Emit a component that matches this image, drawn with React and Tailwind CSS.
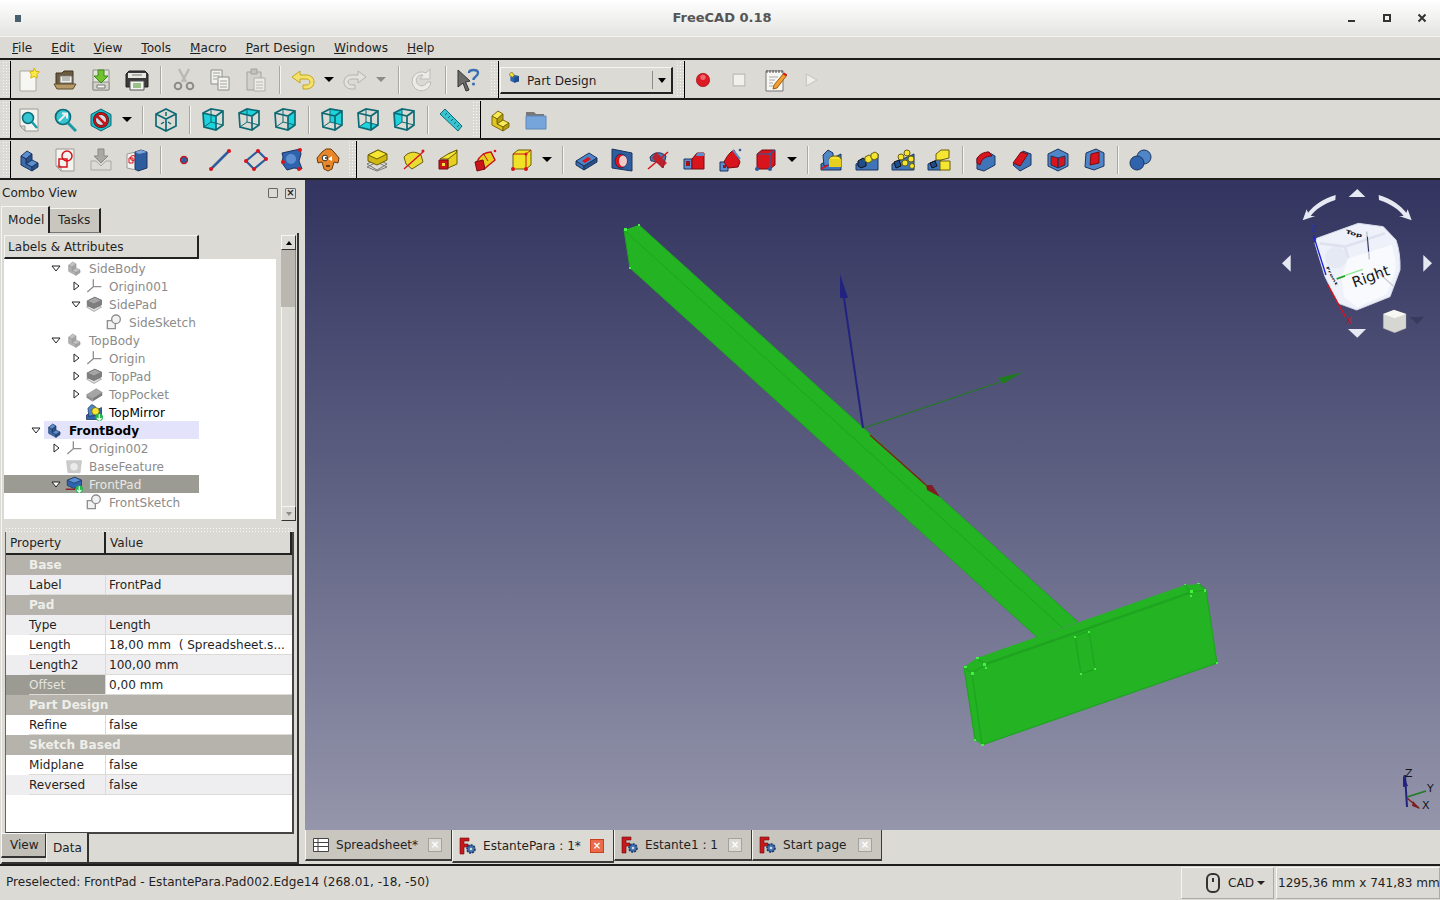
import React from 'react';

const FONT = { fontFamily: '"DejaVu Sans", sans-serif' };

const Svg = ({ s = 24, children }) => (
    <svg width={s} height={s} viewBox="0 0 24 24" className="shrink-0">{children}</svg>
);

// stepped L block used for body / part icons
const Step = ({ top = '#5c8fcf', left = '#3d6cab', right = '#27508a', line = '#1c3560', s }) => (
    <Svg s={s}>
        <path d="M4 8 10 3 15 6 9 11Z" fill={top} stroke={line} />
        <path d="M9 11 15 6V12L9 16Z" fill={right} stroke={line} />
        <path d="M9 16 15 12 21 15 15 19Z" fill={top} stroke={line} />
        <path d="M4 8 9 11V16L15 19V23L4 17Z" fill={left} stroke={line} />
        <path d="M15 19 21 15V19L15 23Z" fill={right} stroke={line} />
    </Svg>
);

// teal wire cube for the standard views
const Wire = ({ face }) => {
    const faces = {
        front: 'M2 5 15 8V22L3 19Z',
        top: 'M2 5 10 1 22 3 15 8Z',
        right: 'M15 8 22 3V17L15 22Z',
        rear: 'M10 1 22 3V17L10 14Z',
        bottom: 'M3 19 10 14 22 17 15 22Z',
        left: 'M2 5 10 1V14L3 19Z',
    };
    return (
        <Svg>
            {face && <path d={faces[face]} fill="#1fd3dd" />}
            <path d="M10 1V14L3 19M10 14 22 17" fill="none" stroke="#0d6a74" strokeWidth="1" />
            <path d="M2 5 10 1 22 3V17L15 22 3 19ZM2 5 15 8 22 3M15 8V22" fill="none" stroke="#0d6a74" strokeWidth="1.700" />
        </Svg>
    );
};

const IsoCube = () => (
    <Svg>
        <path d="M12 1 22 6V18L12 23 2 18V6ZM2 6 12 11 22 6M12 11V23" fill="none" stroke="#0d6a74" strokeWidth="1.700" />
        <path d="M7 16 10 14M17 16 14 14M12 4V8" stroke="#0d6a74" strokeWidth="1.500" />
    </Svg>
);

const Page = ({ children }) => (
    <Svg>
        <path d="M3 1H21V23H8L3 18Z" fill="#f3f3f0" stroke="#9a9a94" />
        <path d="M3 18H8V23Z" fill="#d5d5d0" stroke="#9a9a94" />
        {children}
    </Svg>
);

const Icons = {
    new: <Svg><path d="M3 3H19V23H3Z" fill="#f6f6f2" stroke="#a9a9a3" /><path d="m17 0 1.800 3.200 3.600.6-2.500 2.600.5 3.600-3.400-1.600-3.200 1.600.5-3.600L12.800 3.800l3.500-.6Z" fill="#fbe94c" stroke="#d9b400" /></Svg>,
    open: <Svg><path d="M3 5H9L11 3H20V19H3Z" fill="#6d5b3e" stroke="#3f3522" /><path d="M7 8H19V15H7Z" fill="#f1f0ea" stroke="#777" /><path d="M9 10H17M9 12H17" stroke="#888" /><path d="M1 16H23L20 21H4Z" fill="#b59a68" stroke="#5c4c2d" /></Svg>,
    save: <Svg><path d="M4 2H20V22H4Z" fill="#e4e4df" stroke="#8f8f89" /><path d="M4 14H20V22H4Z" fill="#d3d3cd" stroke="#8f8f89" /><path d="M8 17H16V20H8Z" fill="#f7f7f4" stroke="#777" /><path d="M9 2H15V8H19L12 15 5 8H9Z" fill="#70c22e" stroke="#3f8a16" /></Svg>,
    print: <Svg><path d="M1 6 4 3H20L23 6V19H1Z" fill="#3a3a3a" stroke="#222" /><path d="M3 5H21V10H3Z" fill="#e8e8e3" /><path d="M7 7H17" stroke="#777" /><path d="M5 13H19V22H5Z" fill="#f4f4f0" stroke="#555" /><path d="M8 15H16V20H8Z" fill="#9cc089" /></Svg>,
    cut: <Svg><path d="M7 1 14 14M17 1 10 14" stroke="#b9b8b2" strokeWidth="2.400" /><circle cx="6" cy="18" r="3.300" fill="none" stroke="#8d8d88" strokeWidth="2" /><circle cx="18" cy="18" r="3.300" fill="none" stroke="#8d8d88" strokeWidth="2" /></Svg>,
    copy: <Svg><path d="M3 2H14V16H3Z" fill="#f2f2ef" stroke="#8d8d88" /><path d="M10 9H21V22H10Z" fill="#f2f2ef" stroke="#8d8d88" /><path d="M5 5H12M5 8H12M5 11H9M12 13H19M12 16H19M12 19H19" stroke="#a3a39d" /></Svg>,
    paste: <Svg><path d="M3 4H17V22H3Z" fill="#d2d1cb" stroke="#a3a39d" /><path d="M7 1H13V6H7Z" fill="#c2c1bb" stroke="#a3a39d" /><path d="M10 10H21V23H10Z" fill="#ecebe7" stroke="#b0b0aa" /><path d="M12 14H19M12 17H19M12 20H19" stroke="#b9b9b3" /></Svg>,
    undo: <Svg><path d="M1 9 9 3V7H15C20 7 23 10 23 14S20 21 15 21H12V17H15C17 17 19 16 19 14S17 11 15 11H9V15Z" fill="#f4e26b" stroke="#c2a51c" /></Svg>,
    redo: <Svg><path d="M23 9 15 3V7H9C4 7 1 10 1 14S4 21 9 21H12V17H9C7 17 5 16 5 14S7 11 9 11H15V15Z" fill="#e3e2dd" stroke="#b3b2ac" /></Svg>,
    refresh: <Svg><path d="M20 6V1L16 5A9.500 9.500 0 1 0 21 14H17A5.500 5.500 0 1 1 13 7L10 11H20Z" fill="#ecebe7" stroke="#bdbcb6" /></Svg>,
    what: <Svg><path d="M1 2 13 13 8.500 14 12 22 9 23 6 15 1 19Z" fill="#6a6a68" stroke="#333" /><path d="M12 5C12 1 21 1 21 5 21 9 16.500 8 16.500 12" fill="none" stroke="#3a6fb0" strokeWidth="2.400" /><circle cx="16.500" cy="16" r="1.600" fill="#3a6fb0" /></Svg>,
    rec: <Svg s={16}><circle cx="12" cy="12" r="10" fill="#dc1c24" stroke="#a01018" /><circle cx="12" cy="8" r="4" fill="#ef6a70" /></Svg>,
    stop: <Svg s={14}><path d="M2 2H22V22H2Z" fill="#f0f0ec" stroke="#bdbcb6" strokeWidth="2" /></Svg>,
    macro: <Svg><path d="M3 3H20V23H3Z" fill="#f6f6f2" stroke="#777" /><path d="M4 2V5M7 2V5M10 2V5M13 2V5M16 2V5M19 2V5" stroke="#555" /><path d="M6 9H15M6 12H12M6 15H10M6 18H10" stroke="#aaa" /><path d="M11 17 21 5 24 7 14 20 10 21Z" fill="#f0a030" stroke="#a05a10" /><path d="M20.500 5.500 23.500 7.500" stroke="#d8141c" strokeWidth="2" /></Svg>,
    play: <Svg s={16}><path d="M5 3 21 12 5 21Z" fill="#eeeeea" stroke="#c4c3bd" strokeWidth="1.500" /></Svg>,
    fitAll: <Page><circle cx="11" cy="10" r="5.500" fill="#35c4d0" stroke="#0d6a74" strokeWidth="1.500" /><path d="M15 14 20 20" stroke="#1a9aa6" strokeWidth="2.500" /></Page>,
    fitSel: <Svg><circle cx="10" cy="9" r="7.500" fill="#35c4d0" stroke="#0d6a74" strokeWidth="1.700" /><path d="M15 15 23 23" stroke="#1a9aa6" strokeWidth="3" /><path d="M6 13 13 6M9 5.500H14V10.500" stroke="#eee" strokeWidth="2" fill="none" /></Svg>,
    noDraw: <Svg><path d="M12 1 22 6.500V17.500L12 23 2 17.500V6.500Z" fill="#1fb9c6" stroke="#0d6a74" /><circle cx="12" cy="12" r="6.500" fill="#d4dbe0" stroke="#222" strokeWidth="3" /><circle cx="12" cy="12" r="6.500" fill="none" stroke="#c9141c" strokeWidth="2" /><path d="M7.500 7.500 16.500 16.500" stroke="#c9141c" strokeWidth="2.500" /></Svg>,
    iso: <IsoCube />,
    vFront: <Wire face="front" />,
    vTop: <Wire face="top" />,
    vRight: <Wire face="right" />,
    vRear: <Wire face="rear" />,
    vBottom: <Wire face="bottom" />,
    vLeft: <Wire face="left" />,
    ruler: <Svg><path d="M1 6 6 1 23 18 19 23Z" fill="#35c4d0" stroke="#0d6a74" /><path d="M8 5 6 7M11 8 9 10M14 11 12 13M17 14 15 16M20 17 18 19" stroke="#0d6a74" /></Svg>,
    part: <Step top="#f6e95a" left="#e0c71f" right="#b59d10" line="#7a6a08" />,
    folder: <Svg><path d="M2 4H10L12 6H20V12H2Z" fill="#777" /><path d="M2 8H22V21H2Z" fill="#76a5dc" stroke="#5d87b8" /></Svg>,
    body: <Step />,
    sketch: <Page><path d="M6 11H14V19H6Z" fill="none" stroke="#d8141c" strokeWidth="1.500" /><circle cx="14" cy="8" r="5" fill="none" stroke="#d8141c" strokeWidth="1.500" /></Page>,
    importIco: <Svg><path d="M9 1H15V8H19L12 15 5 8H9Z" fill="#a9a9a4" stroke="#8b8b86" /><path d="M2 13H7L12 18 17 13H22V22H2Z" fill="#dcdbd6" stroke="#a9a9a4" /></Svg>,
    map: <Svg><path d="M2 6 11 4V22L2 20Z" fill="#f1f1ee" stroke="#9a9a94" /><path d="M10 4 16 2 22 4V20L13 23 10 21Z" fill="#2d5d9e" stroke="#1c3560" /><path d="M10 4 16 2 22 4 14 6Z" fill="#7fa5d6" /><path d="M4 10H8V15H4Z" fill="none" stroke="#d8141c" /><circle cx="8" cy="10" r="2.500" fill="none" stroke="#d8141c" /></Svg>,
    point: <Svg><circle cx="12" cy="12" r="3.500" fill="#2d5d9e" stroke="#c9141c" strokeWidth="1.300" /></Svg>,
    line: <Svg><path d="M3 21 21 3" stroke="#2d5d9e" strokeWidth="2.500" /><circle cx="3" cy="21" r="2" fill="#d8141c" /><circle cx="21" cy="3" r="2" fill="#d8141c" /></Svg>,
    plane: <Svg><path d="M14 3 22 11 10 21 2 13Z" fill="none" stroke="#2d5d9e" strokeWidth="2.200" /><circle cx="14" cy="3" r="2" fill="#d8141c" /><circle cx="22" cy="11" r="2" fill="#d8141c" /><circle cx="10" cy="21" r="2" fill="#d8141c" /><circle cx="2" cy="13" r="2" fill="#d8141c" /></Svg>,
    binder: <Svg><path d="M2 5 20 1 21 6 19 13 22 21 14 20 7 22 2 15 3 9Z" fill="#2f63ad" stroke="#1c3560" /><circle cx="11" cy="11" r="5" fill="#5d8fd0" /><circle cx="3" cy="14" r="2" fill="#d8141c" /><circle cx="20" cy="2" r="2" fill="#d8141c" /><circle cx="19" cy="21" r="2" fill="#d8141c" /></Svg>,
    clone: <Svg><path d="M1 10 6 4 10 1H15L18 4 23 10 22 15 18 14 16 21 12 23 8 21 6 14 2 15Z" fill="#e8862a" stroke="#6a3a10" /><circle cx="9" cy="10" r="2.800" fill="#fff" stroke="#333" /><circle cx="10" cy="10" r="1" fill="#222" /><path d="M12 11 16 8 16 13Z" fill="#fff" /><path d="M10 18H14" stroke="#6a3a10" strokeWidth="2" /></Svg>,
    pad: <Svg><path d="M2 16 12 11 22 16 12 22Z" fill="#dcdbd6" stroke="#777" /><path d="M2 19 12 14 22 19 12 23Z" fill="none" stroke="#777" /><path d="M3 7 13 2 22 6V12L12 17 3 13Z" fill="#d1b912" stroke="#6a5e08" /><path d="M3 7 13 2 22 6 12 11Z" fill="#f4e633" stroke="#6a5e08" /></Svg>,
    revolve: <Svg><path d="M3 9C8 3 15 3 20 7L22 14 11 21 5 16Z" fill="#eadb33" stroke="#6a5e08" /><path d="M3 21 22 4" stroke="#d8141c" strokeWidth="1.400" /><circle cx="22" cy="3" r="1.500" fill="#d8141c" /></Svg>,
    loft: <Svg><path d="M11 6 20 2V16L11 20Z" fill="#e6cf1f" stroke="#6a5e08" /><path d="M3 11 11 6 20 2 19 5 11 11Z" fill="#f4e633" stroke="#6a5e08" /><path d="M2 12H11V21H2Z" fill="#c9141c" stroke="#7a0a10" /><path d="M5 15H8V18H5Z" fill="#f4e633" /></Svg>,
    pipe: <Svg><path d="M4 14C6 8 12 4 18 4L22 12 11 21Z" fill="#e6cf1f" stroke="#c9141c" strokeWidth="1.300" /><path d="M2 14 10 12 12 21 4 23Z" fill="#c9141c" stroke="#7a0a10" /><path d="M18 4 22 12M10 5 15 13" stroke="#c9141c" /><circle cx="22" cy="3" r="1.300" fill="#d8141c" /></Svg>,
    prim: <Svg><path d="M4 6 9 2 22 2V17L17 21H4Z" fill="#f0e226" stroke="#6a5e08" /><path d="M4 6H17V21M17 6 22 2" fill="none" stroke="#c9141c" /><circle cx="4" cy="21" r="2" fill="#d8141c" /><circle cx="17" cy="21" r="2" fill="#d8141c" /><circle cx="17" cy="6" r="1.500" fill="#d8141c" /></Svg>,
    pocket: <Svg><path d="M2 13 15 5 23 10 10 18Z" fill="#4f86c7" stroke="#1c3560" /><path d="M2 13 10 18V22L2 17Z" fill="#3d6cab" stroke="#1c3560" /><path d="M10 18 23 10V14L10 22Z" fill="#27508a" stroke="#1c3560" /><path d="M8 13 14 9 17 11 11 15Z" fill="#d8141c" /></Svg>,
    hole: <Svg><path d="M2 1 22 5V23L2 20Z" fill="#2f5d9e" stroke="#1c3560" /><ellipse cx="11" cy="13" rx="6" ry="7" fill="#d8141c" stroke="#1c3560" /><ellipse cx="13" cy="13" rx="4" ry="5.500" fill="#f1c8c8" /></Svg>,
    groove: <Svg><path d="M4 9C9 3 16 4 20 8L17 20C14 15 9 13 5 13Z" fill="#4f78ad" stroke="#1c3560" /><path d="M10 4 21 15 16 20 6 10Z" fill="#c9141c" opacity=".85" /><path d="M2 21 22 4" stroke="#d8141c" strokeWidth="1.500" /></Svg>,
    subLoft: <Svg><path d="M2 11H10V21H2Z" fill="#5c8fcf" stroke="#1c3560" /><path d="M4 13H8V18H4Z" fill="#a01018" /><path d="M10 11 15 5H22V21H10Z" fill="#d8141c" stroke="#7a0a10" /><path d="M15 5H22V8H14Z" fill="#5c8fcf" /></Svg>,
    subPipe: <Svg><path d="M2 14H10V23H2Z" fill="#5c8fcf" stroke="#1c3560" /><path d="M5 17H8V20H5Z" fill="#a01018" /><path d="M6 14C9 8 12 4 16 2L22 14 20 19 10 20Z" fill="#d8141c" stroke="#7a0a10" /><path d="M15 2 22 11" stroke="#5c8fcf" strokeWidth="2" /><circle cx="22" cy="2" r="1.300" fill="#2d5d9e" /></Svg>,
    subPrim: <Svg><path d="M3 6 8 2 21 2V17L16 21H3Z" fill="#d8141c" stroke="#7a0a10" /><path d="M3 6H16V21M16 6 21 2" fill="none" stroke="#2d5d9e" strokeWidth="1.200" /><circle cx="3" cy="21" r="2" fill="#2d5d9e" /><circle cx="16" cy="21" r="2" fill="#2d5d9e" /><circle cx="16" cy="6" r="1.500" fill="#2d5d9e" /></Svg>,
    mirror: <Svg><path d="M2 22V16L22 6V22Z" fill="#3f74b8" stroke="#1c3560" /><path d="M4 7 9 2 14 5V16L5 18Z" fill="#4f86c7" stroke="#1c3560" /><ellipse cx="16" cy="11" rx="6" ry="3" fill="#f4e633" stroke="#6a5e08" /><path d="M10 11H22V19H10Z" fill="#e6cf1f" /><path d="M2 21 9 17" stroke="#d8141c" strokeWidth="1.500" /></Svg>,
    linear: <Svg><path d="M1 22V16L23 6V22Z" fill="#3f74b8" stroke="#1c3560" /><path d="M3 13 8 10 11 12 11 18 6 20 3 18Z" fill="#1f4d8a" stroke="#111" /><path d="M10 9 14 7 17 9 17 13 13 15 10 13Z" fill="#f4e633" stroke="#6a5e08" /><path d="M16 6 20 4 23 6 23 10 19 12 16 10Z" fill="#f4e633" stroke="#6a5e08" /></Svg>,
    polar: <Svg><path d="M1 22V16L23 6V22Z" fill="#3f74b8" stroke="#1c3560" /><path d="M3 14 8 12 10 18 5 20Z" fill="#1f4d8a" stroke="#111" /><circle cx="10" cy="9" r="3" fill="#f4e633" stroke="#6a5e08" /><circle cx="16" cy="5" r="3" fill="#f4e633" stroke="#6a5e08" /><circle cx="20" cy="11" r="3" fill="#f4e633" stroke="#6a5e08" /><circle cx="14" cy="15" r="3" fill="#f4e633" stroke="#6a5e08" /><circle cx="21" cy="18" r="2.500" fill="#f4e633" stroke="#6a5e08" /></Svg>,
    multi: <Svg><path d="M1 22V16L14 10V22Z" fill="#3f74b8" stroke="#1c3560" /><path d="M3 15 8 13 10 18 5 20Z" fill="#1f4d8a" stroke="#111" /><path d="M9 6 14 2 22 2V10L14 12H9Z" fill="#f4e633" stroke="#6a5e08" /><path d="M13 13H23V22H13Z" fill="#f4e633" stroke="#6a5e08" /></Svg>,
    fillet: <Svg><path d="M3 21 3 10 14 4 21 8V17L10 23Z" fill="#3f74b8" stroke="#1c3560" /><path d="M3 11C5 6 10 4 15 4L18 8C12 8 7 11 6 17L3 15Z" fill="#d8141c" stroke="#7a0a10" /></Svg>,
    chamfer: <Svg><path d="M3 17 13 3 21 6V17L10 23Z" fill="#3f74b8" stroke="#1c3560" /><path d="M3 15 11 4 18 6 10 18Z" fill="#d8141c" stroke="#7a0a10" /></Svg>,
    draft: <Svg><path d="M12 1 22 6V18L12 23 2 18V6Z" fill="#4f86c7" stroke="#1c3560" /><path d="M5 8 12 10V20L5 17ZM12 10 19 8V17L12 20Z" fill="#d8141c" stroke="#1c3560" /></Svg>,
    thick: <Svg><path d="M4 5 14 1 22 5V18L12 22 3 19Z" fill="#4f86c7" stroke="#1c3560" /><path d="M9 6 17 4V15L8 17Z" fill="#d8141c" stroke="#7a0a10" /></Svg>,
    bool: <Svg><circle cx="15" cy="9" r="7" fill="#4f86c7" stroke="#1c3560" /><circle cx="8" cy="15" r="7" fill="#2f63ad" stroke="#1c3560" /></Svg>,
    origin: <Svg s={16}><path d="M11 2V13M11 13 2 21M11 13H23" stroke="#8f8f8f" strokeWidth="2" fill="none" /></Svg>,
    sketchG: <Svg s={16}><path d="M2 10H14V22H2Z" fill="#f2f2f2" stroke="#8f8f8f" strokeWidth="2" /><circle cx="15" cy="8" r="6.500" fill="#f2f2f2" stroke="#8f8f8f" strokeWidth="2" /></Svg>,
};

const Tool = ({ name }) => (
    <div className="w-[36px] h-[36px] flex items-center justify-center shrink-0">{Icons[name]}</div>
);

const Tools = ({ names }) => names.split(' ').map((n, i) => <Tool key={i} name={n} />);

const Drop = ({ dim }) => (
    <div className="w-[16px] flex justify-center shrink-0">
        <div className={`w-0 h-0 border-x-[5px] border-x-transparent border-t-[5px] ${dim ? 'border-t-[#8d8d88]' : 'border-t-black'}`}></div>
    </div>
);

const Sep = () => (
    <div className="w-[11px] h-[28px] flex justify-center shrink-0">
        <div className="w-[2px] h-full bg-[#a9a8a2] border-r border-[#f5f5f2]"></div>
    </div>
);

const Grip = () => (
    <div className="flex self-stretch shrink-0 w-[9px]">
        <div className="w-[8px] h-full bg-[radial-gradient(#f7f7f4_1px,transparent_1px)] bg-[length:3px_3px]"></div>
        <div className="w-[1px] h-full bg-black"></div>
    </div>
);

const ToolRow = ({ children }) => (
    <div className="h-[40px] flex items-center pl-[2px] pt-[1px] border-b-2 border-[#1d1d1b]">{children}</div>
);

const treeRows = [
    { pl: 'pl-[44px]', open: true, icon: 'body', label: 'SideBody' },
    { pl: 'pl-[64px]', open: false, icon: 'origin', label: 'Origin001' },
    { pl: 'pl-[64px]', open: true, icon: 'padG', label: 'SidePad' },
    { pl: 'pl-[84px]', icon: 'sketchG', label: 'SideSketch' },
    { pl: 'pl-[44px]', open: true, icon: 'body', label: 'TopBody' },
    { pl: 'pl-[64px]', open: false, icon: 'origin', label: 'Origin' },
    { pl: 'pl-[64px]', open: false, icon: 'padG', label: 'TopPad' },
    { pl: 'pl-[64px]', open: false, icon: 'pocketG', label: 'TopPocket' },
    { pl: 'pl-[64px]', icon: 'mirrorC', label: 'TopMirror', dark: true },
    { pl: 'pl-[24px]', open: true, icon: 'bodyC', label: 'FrontBody', active: true },
    { pl: 'pl-[44px]', open: false, icon: 'origin', label: 'Origin002' },
    { pl: 'pl-[44px]', icon: 'base', label: 'BaseFeature' },
    { pl: 'pl-[44px]', open: true, icon: 'padC', label: 'FrontPad', selected: true },
    { pl: 'pl-[64px]', icon: 'sketchG', label: 'FrontSketch' },
];

const TreeIcon = ({ name }) => {
    if (name === 'origin' || name === 'sketchG') return Icons[name];
    if (name === 'body') return <div className="opacity-50 saturate-0"><Step s={16} /></div>;
    if (name === 'bodyC') return <Step s={16} />;
    if (name === 'base') return <div className="opacity-60 saturate-0"><Svg s={18}><path d="M2 5H22L20 21H4Z" fill="#aaa" stroke="#999" /><circle cx="12" cy="13" r="5" fill="#ddd" /></Svg></div>;
    if (name === 'mirrorC') return <Svg s={18}><path d="M2 22V16L22 6V22Z" fill="#2f63ad" stroke="#1c3560" /><path d="M4 7 9 2 14 5V16L5 18Z" fill="#4f86c7" stroke="#1c3560" /><circle cx="14" cy="11" r="5" fill="#f4e633" stroke="#6a5e08" /><circle cx="19" cy="19" r="5" fill="#22b84a" /><path d="M19 15V23M16 20 19 23 22 20" stroke="#fff" strokeWidth="1.500" fill="none" /></Svg>;
    if (name === 'padC') return <Svg s={18}><path d="M3 7 13 3 22 7V14L12 18 3 14Z" fill="#2f63ad" stroke="#1c3560" /><path d="M3 7 13 3 22 7 12 11Z" fill="#5c8fcf" stroke="#1c3560" /><path d="M1 19H14" stroke="#8a2a2a" strokeWidth="2" /><circle cx="19" cy="19" r="5" fill="#22b84a" /><path d="M19 15V23M16 20 19 23 22 20" stroke="#fff" strokeWidth="1.500" fill="none" /></Svg>;
    if (name === 'pocketG') return <Svg s={18}><path d="M2 13 15 5 23 10 10 18Z" fill="#a5a5a5" stroke="#999" /><path d="M2 13 10 18V22L2 17Z" fill="#8f8f8f" /><path d="M10 18 23 10V14L10 22Z" fill="#7a7a7a" /></Svg>;
    return <Svg s={18}><path d="M2 16 12 11 22 16 12 22Z" fill="#ddd" stroke="#999" /><path d="M3 8 13 3 22 7V13L12 18 3 14Z" fill="#7f7f7f" stroke="#666" /><path d="M3 8 13 3 22 7 12 12Z" fill="#a5a5a5" stroke="#777" /></Svg>;
};

const TreeRow = ({ row }) => (
    <div className={`h-[18px] w-[195px] flex items-center ${row.pl} ${row.selected ? 'bg-[#9b9a93] text-[#e8e8e3]' : ''} ${row.dark || row.active ? 'text-black' : row.selected ? '' : 'text-[#8b8b8b]'}`}>
        <div className="w-[16px] flex justify-center shrink-0">
            {row.open === true && <svg width="10" height="7"><path d="M1 1H9L5 6Z" fill="#fff" stroke="#222" /></svg>}
            {row.open === false && <svg width="7" height="10"><path d="M1 1 6 5 1 9Z" fill="#fff" stroke="#222" /></svg>}
        </div>
        <div className={`flex-1 flex items-center h-full ${row.active ? 'bg-[#e3e3fb] font-bold' : ''}`}>
            <div className="w-[25px] flex justify-center shrink-0 pr-[5px]"><TreeIcon name={row.icon} /></div>
            <span className="whitespace-nowrap pt-[2px]">{row.label}</span>
        </div>
    </div>
);

const props = [
    { group: 'Base' },
    { name: 'Label', value: 'FrontPad', alt: true },
    { group: 'Pad' },
    { name: 'Type', value: 'Length', alt: true },
    { name: 'Length', value: '18,00 mm  ( Spreadsheet.s...' },
    { name: 'Length2', value: '100,00 mm', alt: true },
    { name: 'Offset', value: '0,00 mm', selected: true },
    { group: 'Part Design' },
    { name: 'Refine', value: 'false' },
    { group: 'Sketch Based' },
    { name: 'Midplane', value: 'false' },
    { name: 'Reversed', value: 'false', alt: true },
];

const PropRow = ({ p }) => {
    if (p.group) {
        return <div className="h-[20px] bg-[#b5b3ac] text-[#eeeee9] font-bold pl-[23px] leading-[20px]">{p.group}</div>;
    }
    const rowBg = p.alt ? 'bg-[#eeeef0]' : 'bg-white';
    return (
        <div className={`h-[20px] flex ${rowBg} leading-[20px]`}>
            <div className={`w-[100px] pl-[23px] shrink-0 border-r border-[#dcdad5] ${p.selected ? 'bg-[#9b9a93] text-[#e4e4df]' : ''}`}>
                <div className="border-b border-[#dcdad5] h-[20px]">{p.name}</div>
            </div>
            <div className="flex-1 pl-[3px] border-b border-[#dcdad5] whitespace-pre">{p.value}</div>
        </div>
    );
};

const DocTab = ({ w, active, children, label }) => (
    <div className={`${w} flex items-center shrink-0 border-b-2 border-r border-[#3a3a38] border-l border-l-[#f5f5f2] ${active ? 'bg-[#dcdad5] h-[33px]' : 'bg-[#c8c6bf] h-[31px]'}`}>
        <div className="w-[30px] flex justify-center shrink-0">{children}</div>
        <span className="flex-1 whitespace-nowrap pt-[2px]">{label}</span>
        <div className={`w-[14px] h-[14px] mr-[9px] flex items-center justify-center border text-[10px] font-bold leading-none text-white ${active ? 'bg-[#ea6a4a] border-[#c8401e]' : 'bg-[#dcdad5] border-[#a3a39d]'}`}>×</div>
    </div>
);

const FcLogo = () => (
    <svg width="18" height="18" viewBox="0 0 18 18" className="shrink-0">
        <path d="M1 1H10V4H5V7H9V10H5V17H1Z" fill="#c8181c" stroke="#6a0a0c" strokeWidth=".6" />
        <circle cx="12" cy="12" r="4" fill="#3f6fb0" stroke="#1c3560" strokeDasharray="2 1" strokeWidth="1.600" />
        <circle cx="12" cy="12" r="1.300" fill="#dcdad5" />
    </svg>
);

// model, origin axes, nav cube and axis cross, all in screen coordinates
const Scene = () => (
    <svg className="absolute inset-0 w-full h-full" viewBox="305 180 1135 650">
        <polygon points="624,230 639,225 1078,622 1037,637 630,268" fill="#23b323" />
        <path d="M624 230 1063 628M624 230 630 268" stroke="#1fa321" fill="none" />
        <path d="M639 225 1078 622M630 268 1037 637" stroke="#1fa321" fill="none" />
        <path d="M870 435 926 485" stroke="#7f1f22" strokeWidth="1.500" />
        <polygon points="926,485 932,485 940,497 927,490" fill="#7f1f22" />
        <path d="M863 428 844 298" stroke="#22237f" strokeWidth="2" />
        <polygon points="840,274 848,298 840,298" fill="#22237f" />
        <path d="M864 428 1000 382" stroke="#1f7a22" strokeWidth="1.300" />
        <polygon points="1023,372 1003,384 998,378" fill="#1f7a22" />

        <polygon points="964,667 977,658 1185,585 1199,584 1206,590 1217,663 982,745 975,740" fill="#23b323" />
        <path d="M972 673 982 745M964 667 975 740M964 667 972 673 985 665M977 658 984 664 1190 592 1206 590M972 673 985 665 1191 593M1185 585 1191 593M1199 584 1206 590M1206 590 1217 663 982 745" fill="none" stroke="#1fa321" strokeWidth="1.200" />
        <path d="M1075 636 1089 631 1095 669 1081 674Z" fill="none" stroke="#1fa321" strokeWidth="1.200" />
        <g fill="#45f045">
            <rect x="624" y="228" width="3" height="3" /><rect x="638" y="224" width="2" height="2" /><rect x="629" y="267" width="2" height="2" />
            <rect x="964" y="666" width="3" height="2" /><rect x="976" y="657" width="3" height="2" /><rect x="971" y="672" width="3" height="3" /><rect x="983" y="663" width="3" height="3" /><rect x="985" y="667" width="2" height="2" />
            <rect x="974" y="739" width="2" height="2" /><rect x="981" y="744" width="3" height="2" /><rect x="1216" y="662" width="2" height="2" />
            <rect x="1184" y="584" width="2" height="1" /><rect x="1190" y="590" width="3" height="3" /><rect x="1190" y="595" width="2" height="2" /><rect x="1204" y="589" width="2" height="3" /><rect x="1197" y="583" width="3" height="1" />
            <rect x="1074" y="636" width="2" height="2" /><rect x="1088" y="631" width="2" height="2" /><rect x="1094" y="668" width="2" height="2" /><rect x="1080" y="673" width="2" height="2" />
        </g>

        <g transform="translate(1270 180) scale(.33333)">
            <g fill="#e6e9f2">
                <polygon points="262,27 236,51 286,51" />
                <polygon points="36,250 62,225 62,275" />
                <polygon points="486,250 460,225 460,275" />
                <polygon points="262,473 234,447 288,447" />
                <path d="M197 45 196 60C160 72 135 90 122 108L136 108 98 121 110 88 114 98C130 78 160 55 197 45Z" />
                <path d="M326 45 327 60C363 72 388 90 401 108L387 108 425 121 413 88 409 98C393 78 363 55 326 45Z" />
            </g>
            <path d="M140 175 265 130 340 140 378 180Q392 220 390 270L360 350 260 390 205 370 165 290 135 190Z" fill="#eef1f9" stroke="#d5dbe8" strokeWidth="3" />
            <path d="M235 235 365 195Q378 230 376 275L350 342 262 382 222 352 215 290Z" fill="#f8fafe" />
            <path d="M150 190 225 200 345 160M225 200 235 235" stroke="#dde2ee" strokeWidth="8" fill="none" />
            <circle cx="198" cy="233" r="32" fill="#e5e9f3" />
            <path d="M290 155 298 238" stroke="#c8ccd6" strokeWidth="5" />
            <path d="M292 170 296 215" stroke="#2a2f60" strokeWidth="3" />
            <path d="M310 265 370 318" stroke="#c8ccd6" strokeWidth="4" />
            <path d="M200 295 278 268" stroke="#8fe88f" strokeWidth="4" />
            <path d="M200 297 225 288" stroke="#1f9a22" strokeWidth="4" />
            <text x="0" y="0" transform="translate(253 323) rotate(-20)" fontSize="44" fill="#15151a" style={FONT}>Right</text>
            <text x="0" y="0" transform="translate(226 160) rotate(14) scale(1 .6)" fontSize="26" fontWeight="700" fill="#15151a" style={FONT}>Top</text>
            <text x="0" y="0" transform="translate(168 262) rotate(62) scale(.8 .4)" fontSize="26" fontWeight="700" fill="#15151a" style={FONT}>Front</text>
            <path d="M130 165 168 285" stroke="#1a22e0" strokeWidth="4" />
            <path d="M172 312 226 410" stroke="#d8141c" strokeWidth="4" />
            <text x="122" y="155" fontSize="26" fill="#2530b0" style={FONT}>Z</text>
            <text x="228" y="432" fontSize="26" fill="#c9141c" style={FONT}>X</text>
            <polygon points="340,402 372,390 408,402 408,445 374,458 340,445" fill="#d6d6d2" stroke="#b5b5b1" />
            <polygon points="340,402 372,390 408,402 374,415" fill="#f7f7f4" />
            <polygon points="420,411 462,411 441,433" fill="#3a3a5c" />
        </g>

        <path d="M1407 807 1405 775" stroke="#22237f" strokeWidth="2" />
        <polygon points="1403,775 1408,786 1403,787" fill="#22237f" />
        <path d="M1407 797 1426 791" stroke="#1f7a22" strokeWidth="1.500" />
        <path d="M1407 798 1419 808" stroke="#7f1f22" strokeWidth="1.500" />
        <polygon points="1413,801 1420,809 1412,806" fill="#7f1f22" />
        <text x="1405" y="777" fontSize="11" fill="#15151a" style={FONT}>Z</text>
        <text x="1427" y="792" fontSize="11" fill="#15151a" style={FONT}>Y</text>
        <text x="1422" y="809" fontSize="11" fill="#15151a" style={FONT}>X</text>
    </svg>
);

const MenuItem = ({ k, rest }) => (
    <span className="mr-[19px]"><span className="underline">{k}</span>{rest}</span>
);

const App = () => {
    return (
        <div className="w-[1440px] h-[900px] overflow-hidden flex flex-col bg-[#dcdad5] text-[12.08px] text-[#1f1f1f]" style={FONT}>
            {/* Window title */}
            <div className="h-[36px] shrink-0 flex items-center pl-[15px] pr-[12px] bg-gradient-to-b from-white to-[#e4e4e2]">
                <div className="w-[82px]"><div className="w-[6px] h-[7px] bg-[#48606e]"></div></div>
                <div className="flex-1 text-center font-bold text-[13px] text-[#555]">FreeCAD 0.18</div>
                <div className="flex gap-[25px] items-center w-[81px]">
                    <svg width="10" height="10"><path d="M1 8H8" stroke="#333" strokeWidth="2" /></svg>
                    <svg width="10" height="10"><path d="M2 2H8V8H2Z" fill="none" stroke="#333" strokeWidth="2" /></svg>
                    <svg width="10" height="10"><path d="M1.500 1.500 8.500 8.500M8.500 1.500 1.500 8.500" stroke="#333" strokeWidth="2" /></svg>
                </div>
            </div>

            {/* Menu */}
            <div className="h-[24px] shrink-0 flex items-center pl-[12px] pt-[1px] border-t border-[#f5f5f2] border-b-2 border-b-[#1d1d1b]">
                <MenuItem k="F" rest="ile" />
                <MenuItem k="E" rest="dit" />
                <MenuItem k="V" rest="iew" />
                <MenuItem k="T" rest="ools" />
                <MenuItem k="M" rest="acro" />
                <MenuItem k="P" rest="art Design" />
                <MenuItem k="W" rest="indows" />
                <MenuItem k="H" rest="elp" />
            </div>

            {/* Toolbars */}
            <ToolRow>
                <Grip />
                <Tools names="new open save print" /><Sep />
                <Tools names="cut copy paste" /><Sep />
                <Tool name="undo" /><Drop /><Tool name="redo" /><Drop dim />
                <div className="w-[4px]"></div><Sep />
                <Tool name="refresh" /><Sep /><Tool name="what" />
                <div className="w-[3px]"></div>
                <Grip />
                <div className="w-[173px] h-[27px] ml-[1px] mt-[2px] flex items-center pl-[8px] border border-[#f5f5f2] border-r-[#222] border-b-[#222] border-r-2 border-b-2 shrink-0">
                    <Svg s={16}><path d="M2 7 8 4 15 6V14L8 16 2 13Z" fill="#2f63ad" /><path d="M8 9 15 6V14L8 16Z" fill="#1f4d8a" /><path d="M0 4 4 0 8 5 5 8Z" fill="#f4e633" stroke="#6a5e08" /></Svg>
                    <span className="ml-[2px] flex-1 pt-[2px]">Part Design</span>
                    <div className="w-[19px] h-[18px] border-l border-[#8d8d88] flex items-center justify-center">
                        <div className="w-0 h-0 border-x-[4.500px] border-x-transparent border-t-[5px] border-t-black"></div>
                    </div>
                </div>
                <div className="w-[3px]"></div>
                <Grip />
                <Tools names="rec stop macro play" />
            </ToolRow>
            <ToolRow>
                <Grip />
                <Tools names="fitAll fitSel noDraw" /><Drop />
                <div className="w-[2px]"></div><Sep />
                <Tool name="iso" /><Sep />
                <Tools names="vFront vTop vRight" /><Sep />
                <Tools names="vRear vBottom vLeft" /><Sep />
                <Tool name="ruler" />
                <div className="w-[3px]"></div>
                <Grip />
                <div className="w-[1px]"></div>
                <Tools names="part folder" />
            </ToolRow>
            <ToolRow>
                <Grip />
                <Tools names="body sketch importIco map" /><Sep />
                <Tools names="point line plane binder clone" />
                <div className="w-[2px]"></div>
                <Grip />
                <div className="w-[2px]"></div>
                <Tools names="pad revolve loft pipe prim" /><Drop />
                <div className="w-[2px]"></div><Sep />
                <Tools names="pocket hole groove subLoft subPipe subPrim" /><Drop />
                <div className="w-[2px]"></div><Sep />
                <Tools names="mirror linear polar multi" /><Sep />
                <Tools names="fillet chamfer draft thick" /><Sep />
                <Tool name="bool" />
            </ToolRow>

            {/* Main area */}
            <div className="flex-1 flex min-h-0">
                {/* Combo view */}
                <div className="w-[305px] shrink-0 flex flex-col pl-[1px] pr-[6px]">
                    <div className="h-[26px] flex items-center pl-[1px] shrink-0">
                        <span className="flex-1">Combo View</span>
                        <div className="w-[10px] h-[10px] border border-[#666] mr-[7px] rounded-[1px]"></div>
                        <div className="w-[11px] h-[11px] border border-[#666] mr-[3px] flex items-center justify-center text-[10px] font-bold leading-none rounded-[1px]">×</div>
                    </div>
                    <div className="h-[27px] flex items-end shrink-0">
                        <div className="w-[49px] h-[27px] flex items-center pl-[6px] border-t border-l border-[#f5f5f2] border-r-2 border-r-[#222]">Model</div>
                        <div className="w-[51px] h-[25px] flex items-center pl-[8px] bg-[#c8c6bf] border-t border-[#f5f5f2] border-r-2 border-r-[#222] border-b border-b-[#777]">Tasks</div>
                    </div>
                    <div className="flex-none h-[294px] flex pt-[2px] pl-[2px] border-l border-[#f5f5f2] border-r-2 border-r-[#333]">
                        <div className="w-[272px] flex flex-col">
                            <div className="h-[24px] w-[195px] flex items-center pl-[3px] pt-[2px] border-t border-l border-[#f5f5f2] border-r-2 border-b-2 border-r-[#222] border-b-[#222] shrink-0">Labels &amp; Attributes</div>
                            <div className="bg-white h-[260px]">
                                {treeRows.map((r) => <TreeRow key={r.label} row={r} />)}
                            </div>
                        </div>
                        <div className="w-[15px] ml-[5px] flex flex-col h-[286px]">
                            <div className="h-[15px] border border-[#f5f5f2] border-r-[#333] border-b-[#333] flex items-center justify-center">
                                <div className="w-0 h-0 border-x-[3.500px] border-x-transparent border-b-[4px] border-b-black"></div>
                            </div>
                            <div className="h-[57px] bg-[#b9b7b0] border-r border-[#888]"></div>
                            <div className="flex-1 border-l border-[#f5f5f2] border-r border-r-[#888]"></div>
                            <div className="h-[15px] border border-[#f5f5f2] border-r-[#333] border-b-[#333] flex items-center justify-center">
                                <div className="w-0 h-0 border-x-[3.500px] border-x-transparent border-t-[4px] border-t-[#8d8d88]"></div>
                            </div>
                        </div>
                    </div>
                    {/* Property view */}
                    <div className="flex-1 flex flex-col pl-[3px] pr-[3px] border-l border-[#f5f5f2] border-r-2 border-r-[#333] border-b-2 border-b-[#333] min-h-0">
                        <div className="h-[5px] shrink-0 bg-[radial-gradient(#f7f7f4_1px,transparent_1px)] bg-[length:3px_3px]"></div>
                        <div className="h-[302px] border-l border-[#666] border-r-2 border-r-[#444] border-b-2 border-b-[#444] bg-white">
                            <div className="h-[23px] flex bg-[#dcdad5] leading-[22px]">
                                <div className="w-[100px] pl-[4px] border-r-2 border-[#222] border-b-2 border-b-[#222]">Property</div>
                                <div className="flex-1 pl-[4px] border-r-2 border-[#222] border-b-2 border-b-[#222]">Value</div>
                            </div>
                            {props.map((p) => <PropRow key={p.group || p.name} p={p} />)}
                        </div>
                    </div>
                    <div className="h-[29px] flex shrink-0 -mt-[31px] mb-[2px] items-start">
                        <div className="w-[45px] h-[25px] flex items-center pl-[8px] pt-[1px] bg-[#c0beb7] border border-[#f5f5f2] border-r-[#333] border-b-[#333] border-b-2">View</div>
                        <div className="w-[43px] h-[29px] flex items-center pl-[6px] pt-[1px] bg-[#dcdad5] border-l border-[#f5f5f2] border-r-2 border-r-[#333]">Data</div>
                    </div>
                </div>

                {/* 3D view and document tabs */}
                <div className="flex-1 flex flex-col min-w-0">
                    <div className="relative flex-1 bg-gradient-to-b from-[#33345f] to-[#9596ab]">
                        <Scene />
                    </div>
                    <div className="h-[34px] shrink-0 flex items-start">
                        <DocTab w="w-[147px]" label="Spreadsheet*">
                            <svg width="16" height="14"><path d="M.5.5H15.500V13.500H.5ZM.5 4.500H15.500M.5 8.500H15.500M5 .5V13.500" fill="#fff" stroke="#444" /></svg>
                        </DocTab>
                        <DocTab w="w-[162px]" active label="EstantePara : 1*"><FcLogo /></DocTab>
                        <DocTab w="w-[138px]" label="Estante1 : 1"><FcLogo /></DocTab>
                        <DocTab w="w-[130px]" label="Start page"><FcLogo /></DocTab>
                    </div>
                </div>
            </div>

            {/* Status bar */}
            <div className="h-[36px] shrink-0 flex items-center border-t-2 border-[#1d1d1b]">
                <div className="flex-1 pl-[6px] pb-[2px] whitespace-nowrap">Preselected: FrontPad - EstantePara.Pad002.Edge14 (268.01, -18, -50)</div>
                <div className="w-[93px] h-[32px] flex items-center justify-center gap-[8px] border border-[#f5f5f2] border-r-[#aaa] border-b-[#aaa] pl-[16px]">
                    <svg width="14" height="20" viewBox="0 0 14 20" className="shrink-0"><rect x="1" y="1" width="12" height="18" rx="5" fill="none" stroke="#333" strokeWidth="2" /><path d="M7 5V9" stroke="#333" strokeWidth="2" /></svg>
                    <span className="flex items-center gap-[3px]">CAD<span className="w-0 h-0 border-x-[4px] border-x-transparent border-t-[4px] border-t-[#222]"></span></span>
                </div>
                <div className="w-[164px] h-[32px] ml-[2px] flex items-center pl-[1px] whitespace-nowrap border border-[#f5f5f2] border-r-[#aaa] border-b-[#aaa]">1295,36 mm x 741,83 mm</div>
            </div>
        </div>
    );
};

export default App;
